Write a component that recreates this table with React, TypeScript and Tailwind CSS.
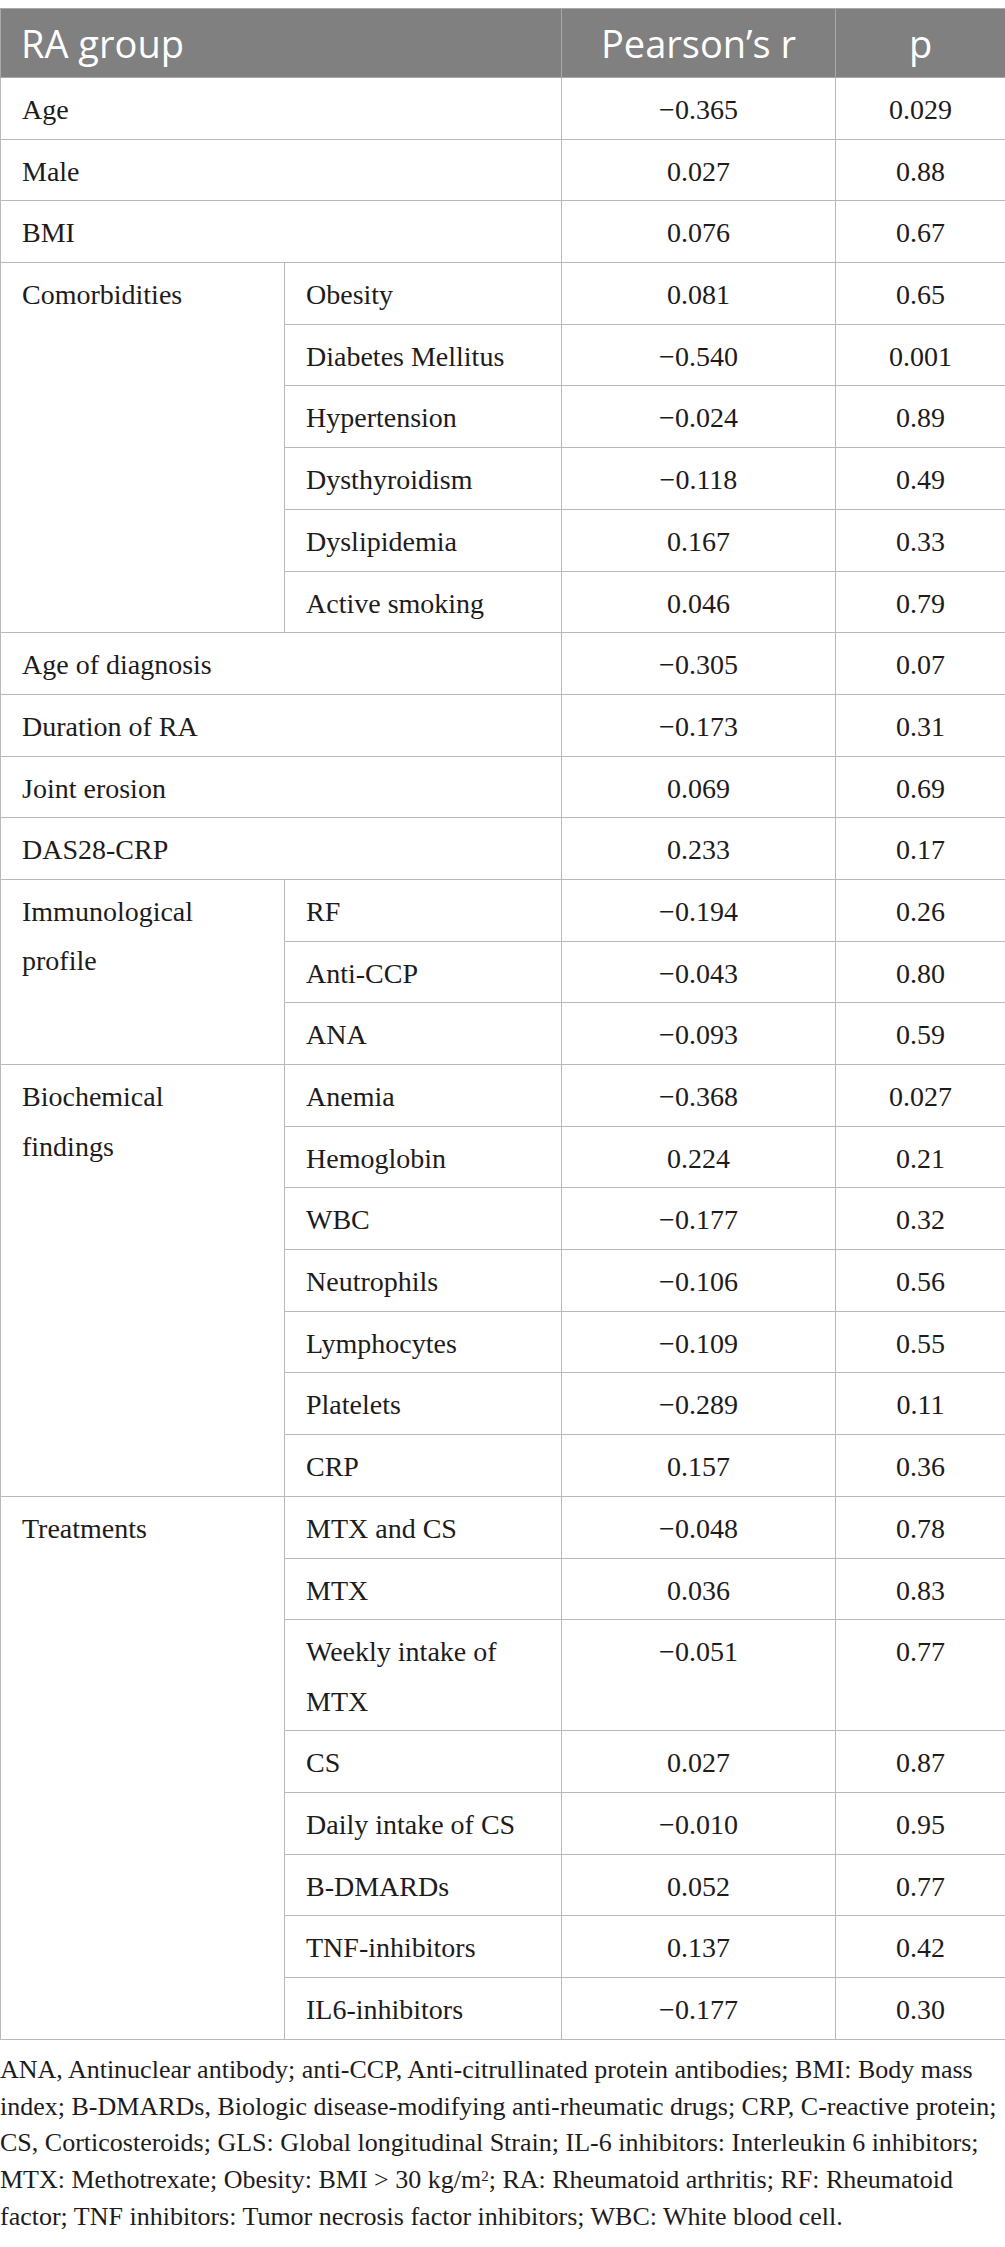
type Row = {
  group?: string[];
  span?: number;
  label?: string[];
  r: string;
  p: string;
  full?: boolean;
};

const rows: Row[] = [
  { label: ["Age"], r: "−0.365", p: "0.029", full: true },
  { label: ["Male"], r: "0.027", p: "0.88", full: true },
  { label: ["BMI"], r: "0.076", p: "0.67", full: true },
  { group: ["Comorbidities"], span: 6, label: ["Obesity"], r: "0.081", p: "0.65" },
  { label: ["Diabetes Mellitus"], r: "−0.540", p: "0.001" },
  { label: ["Hypertension"], r: "−0.024", p: "0.89" },
  { label: ["Dysthyroidism"], r: "−0.118", p: "0.49" },
  { label: ["Dyslipidemia"], r: "0.167", p: "0.33" },
  { label: ["Active smoking"], r: "0.046", p: "0.79" },
  { label: ["Age of diagnosis"], r: "−0.305", p: "0.07", full: true },
  { label: ["Duration of RA"], r: "−0.173", p: "0.31", full: true },
  { label: ["Joint erosion"], r: "0.069", p: "0.69", full: true },
  { label: ["DAS28-CRP"], r: "0.233", p: "0.17", full: true },
  { group: ["Immunological", "profile"], span: 3, label: ["RF"], r: "−0.194", p: "0.26" },
  { label: ["Anti-CCP"], r: "−0.043", p: "0.80" },
  { label: ["ANA"], r: "−0.093", p: "0.59" },
  { group: ["Biochemical", "findings"], span: 7, label: ["Anemia"], r: "−0.368", p: "0.027" },
  { label: ["Hemoglobin"], r: "0.224", p: "0.21" },
  { label: ["WBC"], r: "−0.177", p: "0.32" },
  { label: ["Neutrophils"], r: "−0.106", p: "0.56" },
  { label: ["Lymphocytes"], r: "−0.109", p: "0.55" },
  { label: ["Platelets"], r: "−0.289", p: "0.11" },
  { label: ["CRP"], r: "0.157", p: "0.36" },
  { group: ["Treatments"], span: 8, label: ["MTX and CS"], r: "−0.048", p: "0.78" },
  { label: ["MTX"], r: "0.036", p: "0.83" },
  { label: ["Weekly intake of", "MTX"], r: "−0.051", p: "0.77" },
  { label: ["CS"], r: "0.027", p: "0.87" },
  { label: ["Daily intake of CS"], r: "−0.010", p: "0.95" },
  { label: ["B-DMARDs"], r: "0.052", p: "0.77" },
  { label: ["TNF-inhibitors"], r: "0.137", p: "0.42" },
  { label: ["IL6-inhibitors"], r: "−0.177", p: "0.30" },
];

function Lines({ parts }: { parts: string[] }) {
  return (
    <>
      {parts.map((t, i) => (
        <span key={i}>
          {i > 0 && <br />}
          {t}
        </span>
      ))}
    </>
  );
}

const cell = "border border-[#b9b9b9] align-top pt-[7px] pb-[4.2px] leading-[49.5px]";

export default function App() {
  return (
    <div className="min-h-screen bg-white pt-2 text-[#1e1b1c]">
      <table className="w-[1005px] table-fixed border-collapse font-[family-name:Liberation_Serif,serif] text-[28px]">
        <colgroup>
          <col className="w-[284px]" />
          <col className="w-[277px]" />
          <col className="w-[274px]" />
          <col className="w-[170px]" />
        </colgroup>
        <thead>
          <tr className="h-[69px] bg-[#808080] font-[family-name:Open_Sans,sans-serif] text-[38px] text-white">
            <th colSpan={2} className="border border-[#a9a9a9] pl-[20px] text-left align-middle font-normal">
              RA group
            </th>
            <th className="border border-[#a9a9a9] text-center align-middle font-normal">Pearson’s r</th>
            <th className="border border-[#a9a9a9] text-center align-middle font-normal">p</th>
          </tr>
        </thead>
        <tbody>
          {rows.map((row, i) => (
            <tr key={i}>
              {row.group && (
                <td rowSpan={row.span} className={`${cell} pl-[21px] pr-3`}>
                  <Lines parts={row.group} />
                </td>
              )}
              <td colSpan={row.full ? 2 : 1} className={`${cell} pl-[21px] pr-3`}>
                <Lines parts={row.label ?? []} />
              </td>
              <td className={`${cell} text-center`}>{row.r}</td>
              <td className={`${cell} text-center`}>{row.p}</td>
            </tr>
          ))}
        </tbody>
      </table>
      <p className="mt-[12px] font-[family-name:Liberation_Serif,serif] text-[26px] leading-[36.8px] whitespace-nowrap">
        ANA, Antinuclear antibody; anti-CCP, Anti-citrullinated protein antibodies; BMI: Body mass
        <br />
        index; B-DMARDs, Biologic disease-modifying anti-rheumatic drugs; CRP, C-reactive protein;
        <br />
        CS, Corticosteroids; GLS: Global longitudinal Strain; IL-6 inhibitors: Interleukin 6 inhibitors;
        <br />
        MTX: Methotrexate; Obesity: BMI &gt; 30 kg/m<sup className="text-[15px]">2</sup>; RA: Rheumatoid arthritis; RF: Rheumatoid
        <br />
        factor; TNF inhibitors: Tumor necrosis factor inhibitors; WBC: White blood cell.
      </p>
    </div>
  );
}
